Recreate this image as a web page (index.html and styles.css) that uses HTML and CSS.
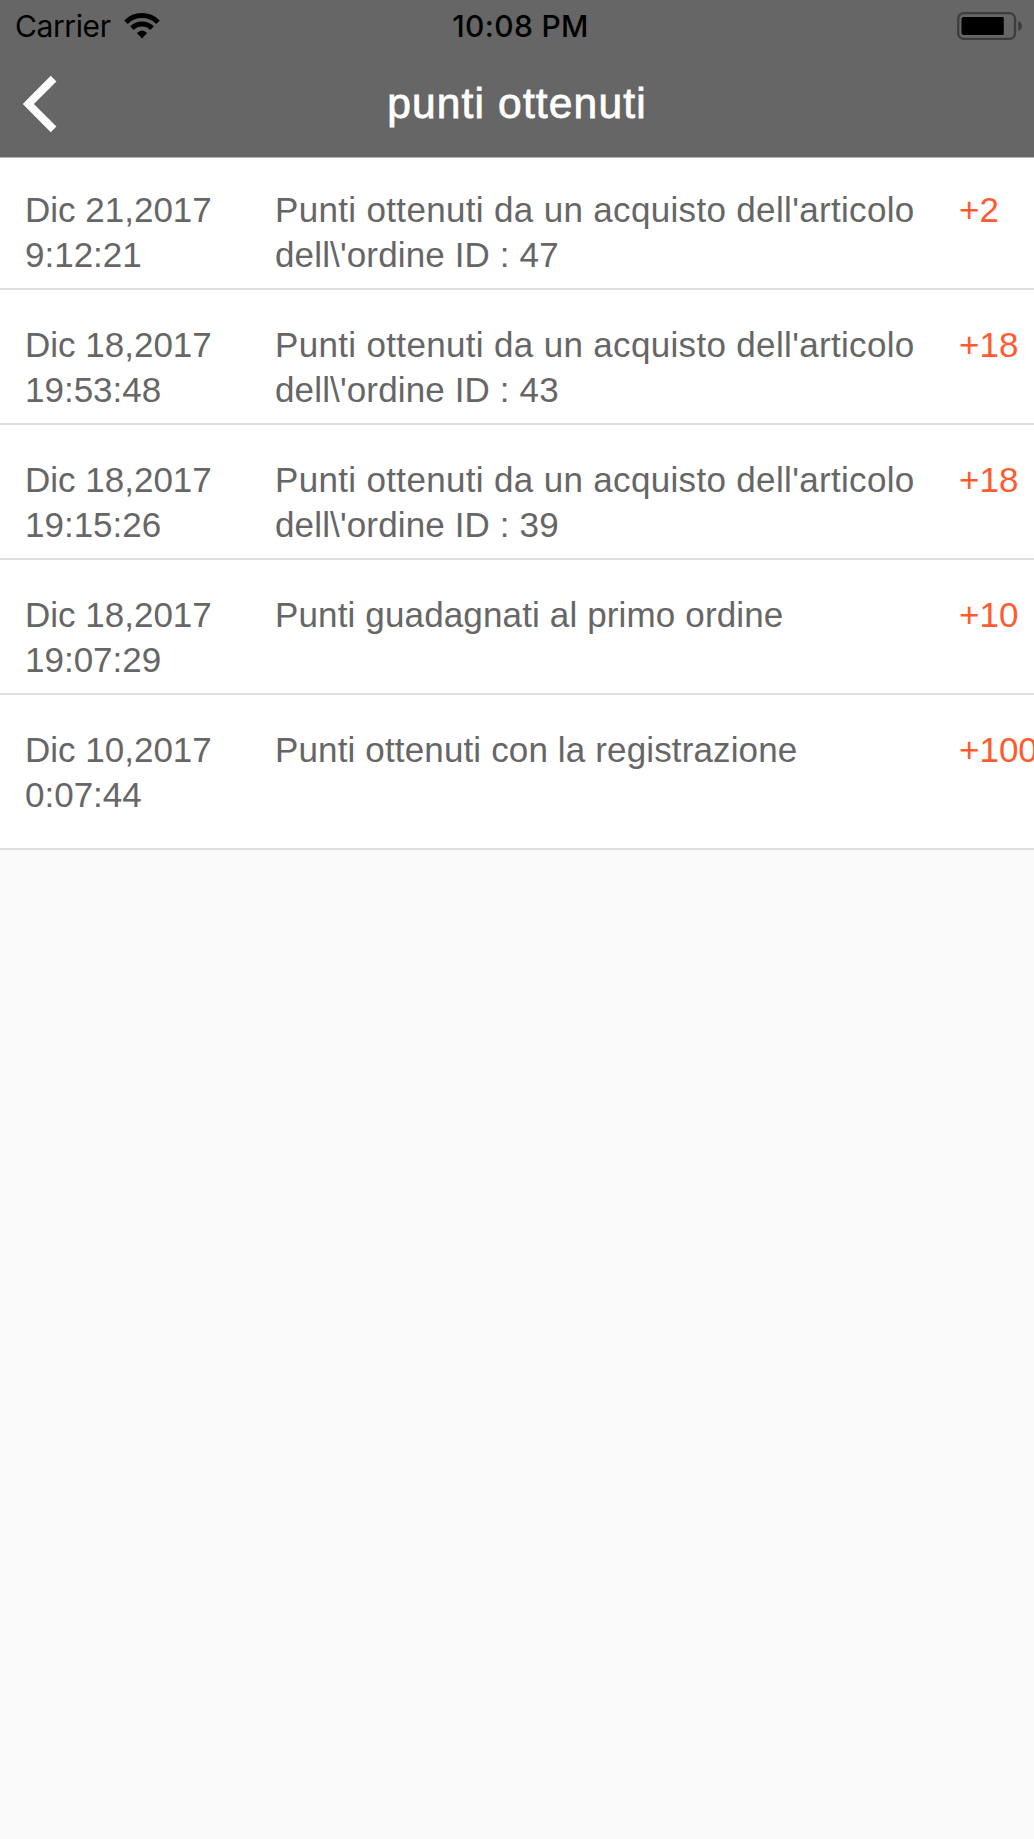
FILE: index.html
```html
<!DOCTYPE html>
<html lang="it">
<head>
<meta charset="utf-8">
<title>punti ottenuti</title>
<link rel="stylesheet" href="styles.css">
</head>
<body>
<header class="header">
  <div class="status">
    <div class="status-left">
      <span class="carrier">Carrier</span>
      <svg class="wifi" width="36" height="26" viewBox="0 0 36 26">
        <g fill="none" stroke="#000" stroke-width="5">
          <path d="M2 9.200A22.700 22.700 0 0 1 34 9.200"/>
          <path d="M7.900 15.100A14.400 14.400 0 0 1 28.100 15.100"/>
        </g>
        <path d="M18 25.500L12.900 20Q18 15 23.100 20Z"/>
      </svg>
    </div>
    <span class="clock">10:08 PM</span>
    <svg class="battery" width="66" height="28" viewBox="0 0 66 28">
      <rect x="1.200" y="1.200" width="56.800" height="25.600" rx="5.500" fill="none" stroke="#3d3d3d" stroke-width="2.300"/>
      <rect x="4.500" y="5" width="42" height="18" rx="2.200"/>
      <rect x="40" y="5" width="6.500" height="18"/>
      <path d="M61.200 9Q65 10.500 65 14T61.200 19Z" fill="#3d3d3d"/>
    </svg>
  </div>
  <div class="nav">
    <svg class="back" width="36" height="58" viewBox="0 0 36 58">
      <path d="M30.600 3.700L5.300 29L30.600 54.300" fill="none" stroke="#fff" stroke-width="8"/>
    </svg>
    <h1 class="title">punti ottenuti</h1>
  </div>
</header>
<main class="list">
  <div class="row">
    <div class="date">Dic 21,2017<br>9:12:21</div>
    <div class="text"><span class="lead">Punti ottenuti da un acquisto dell'articolo</span><br>dell\'ordine ID : 47</div>
    <div class="points">+2</div>
  </div>
  <div class="row">
    <div class="date">Dic 18,2017<br>19:53:48</div>
    <div class="text"><span class="lead">Punti ottenuti da un acquisto dell'articolo</span><br>dell\'ordine ID : 43</div>
    <div class="points">+18</div>
  </div>
  <div class="row">
    <div class="date">Dic 18,2017<br>19:15:26</div>
    <div class="text"><span class="lead">Punti ottenuti da un acquisto dell'articolo</span><br>dell\'ordine ID : 39</div>
    <div class="points">+18</div>
  </div>
  <div class="row">
    <div class="date">Dic 18,2017<br>19:07:29</div>
    <div class="text">Punti guadagnati al primo ordine</div>
    <div class="points">+10</div>
  </div>
  <div class="row">
    <div class="date">Dic 10,2017<br>0:07:44</div>
    <div class="text">Punti ottenuti con la registrazione</div>
    <div class="points">+100</div>
  </div>
</main>
</body>
</html>
```
FILE: styles.css
```css
* {
  box-sizing: border-box;
}

body {
  margin: 0;
  min-height: 1839px;
  overflow: hidden;
  background: #f9f9f9;
  font-family: "Liberation Sans", Arial, sans-serif;
  color: #666;
}

.header {
  height: 158px;
  background: #666;
  border-bottom: 1px solid #b2b2b2;
}

.status {
  display: grid;
  grid-template-columns: 1fr auto 1fr;
  align-items: center;
  height: 50px;
  padding: 0 12px 0 15px;
  font-family: Inter, sans-serif;
  font-size: 30px;
  color: #000;
}

.status-left {
  display: flex;
  align-items: center;
  gap: 14px;
}

.carrier {
  width: 96px;
  letter-spacing: -0.4px;
  line-height: 50px;
  padding-top: 1px;
}

.wifi {
  display: block;
  margin-left: -1px;
}

.clock {
  font-weight: 550;
  letter-spacing: 0.35px;
  line-height: 48px;
  padding: 1px 0 0 4px;
}

.battery {
  display: block;
  justify-self: end;
  margin-right: -1px;
}

.nav {
  display: grid;
  grid-template-columns: 57px 1fr 60px;
  align-items: center;
  height: 107px;
  padding: 0 20px 0 23px;
}

.title {
  margin: 0;
  text-align: center;
  font-size: 42.5px;
  font-weight: 400;
  letter-spacing: 1.15px;
  line-height: 50px;
  color: #fff;
  -webkit-text-stroke: 0.8px #fff;
}

.row {
  display: grid;
  grid-template-columns: 250px 684px 1fr;
  height: 135px;
  padding: 32px 0 0 25px;
  background: #fff;
  border-bottom: 2px solid #dedede;
  font-size: 35px;
  line-height: 45px;
  white-space: nowrap;
}

.row:first-child {
  height: 132px;
  padding-top: 29px;
}

.row:last-child {
  height: 155px;
}

.text {
  letter-spacing: 0.14px;
}

.lead {
  letter-spacing: 0.33px;
}

.points {
  color: #ff5b2e;
}
```
